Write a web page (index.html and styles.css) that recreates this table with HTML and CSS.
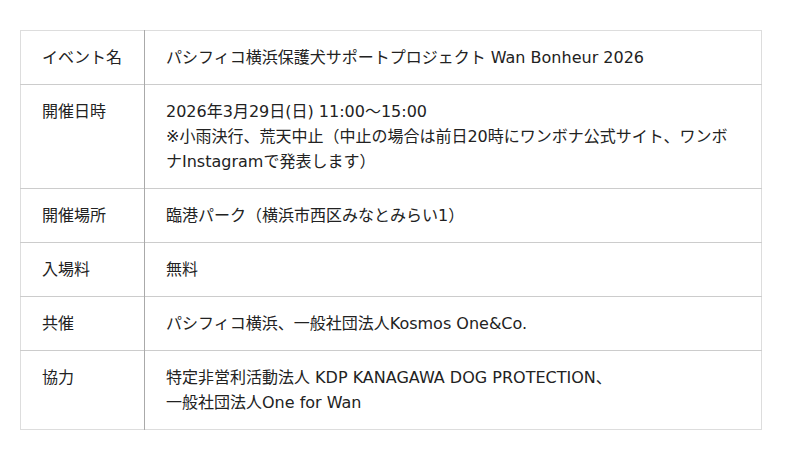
FILE: index.html
```html
<!DOCTYPE html>
<html lang="ja">
<head>
<meta charset="utf-8">
<link rel="stylesheet" href="styles.css">
</head>
<body>
<table class="info">
  <tr><th>イベント名</th><td>パシフィコ横浜保護犬サポートプロジェクト Wan Bonheur 2026</td></tr>
  <tr><th>開催日時</th><td>2026年3月29日(日) 11:00～15:00<br>※小雨決行、荒天中止（中止の場合は前日20時にワンボナ公式サイト、ワンボナInstagramで発表します）</td></tr>
  <tr><th>開催場所</th><td>臨港パーク（横浜市西区みなとみらい1）</td></tr>
  <tr><th>入場料</th><td>無料</td></tr>
  <tr><th>共催</th><td>パシフィコ横浜、一般社団法人Kosmos One&amp;Co.</td></tr>
  <tr><th>協力</th><td>特定非営利活動法人 KDP KANAGAWA DOG PROTECTION、<br>一般社団法人One for Wan</td></tr>
</table>
</body>
</html>
```
FILE: styles.css
```css
html, body {
  margin: 0;
  padding: 0;
  background: #fff;
}
body {
  padding: 30px 38px 0 20px;
  font-family: "DejaVu Sans", "Noto Sans CJK JP", sans-serif;
  font-size: 16px;
  color: #222;
}
.info {
  width: 742px;
  border-collapse: collapse;
  border: 1px solid #ddd;
}
.info th, .info td {
  text-align: left;
  vertical-align: top;
  font-weight: normal;
  line-height: 25px;
  padding: 14px 20px 14px 21px;
  border-top: 1px solid #ccc;
}
.info tr:first-child th, .info tr:first-child td {
  border-top: 1px solid #ddd;
}
.info th {
  width: 82px;
  border-right: 1px solid #aaa;
}
```
